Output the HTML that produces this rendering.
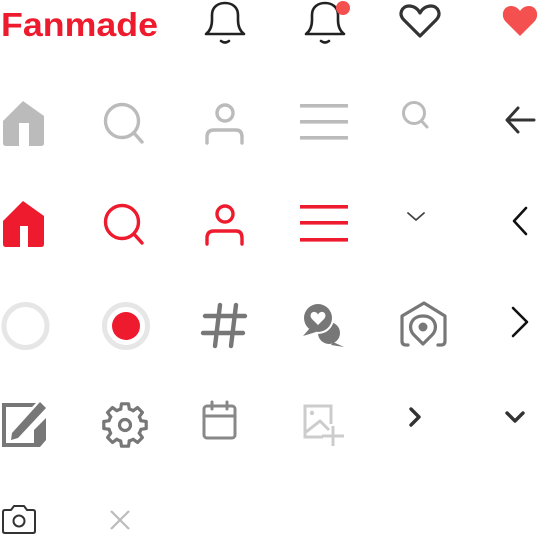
<!DOCTYPE html>
<html><head><meta charset="utf-8"><style>
html,body{margin:0;padding:0;background:#fff;width:540px;height:540px;overflow:hidden}
svg{display:block}
</style></head><body>
<svg width="540" height="540" viewBox="0 0 540 540" xmlns="http://www.w3.org/2000/svg">
<defs>
<path id="tooth" d="M15.9,-4.3 L21.2,-3.5 L21.2,3.5 L15.9,4.3 A16.5 16.5 0 0 1 14.3,8.25" fill="none"/>
</defs>
<!-- Row 1 -->
<text x="1" y="36" font-family="Liberation Sans, sans-serif" font-weight="bold" font-size="33" fill="#ee1b2e" textLength="157" lengthAdjust="spacingAndGlyphs">Fanmade</text>
<g fill="none" stroke="#222" stroke-width="2.6" stroke-linejoin="round" stroke-linecap="round">
 <path d="M206,34 C210,31 212,27 212,20 L212,15 C212,7 218,3 225,3 C232,3 238,7 238,15 L238,20 C238,27 240,31 244,34 Z"/>
 <path d="M221,41 Q225,44 229,41"/>
 <path d="M306,34 C310,31 312,27 312,20 L312,15 C312,7 318,3 325,3 C332,3 338,7 338,15 L338,20 C338,27 340,31 344,34 Z"/>
 <path d="M321,41 Q325,44 329,41"/>
</g>
<circle cx="343" cy="8" r="7" fill="#f55050"/>
<path d="M420,36 L404,20 C398,14 402,6 409,6 C414,6 418,9 420,13 C422,9 426,6 431,6 C438,6 442,14 436,20 Z" fill="none" stroke="#333" stroke-width="3.2" stroke-linejoin="round"/>
<path d="M520,36 L506,22 C500,16 503,6 511,6 C515,6 518,8 520,11 C522,8 525,6 529,6 C537,6 540,16 534,22 Z" fill="#f55050"/>

<!-- Row 2 gray -->
<g transform="translate(0,-4)">
<path d="M3,125 L23,105 L44,120 V147 Q44,150 41,150 H29 V127 H19 V150 H6 Q3,150 3,147 Z" fill="#bbb"/>
<g fill="none" stroke="#bbb" stroke-width="3.4" stroke-linecap="round">
 <circle cx="122" cy="125" r="16.5"/>
 <path d="M134,137 L142,146"/>
 <circle cx="225" cy="117" r="8"/>
 <path d="M207,147 V141 Q207,134 214,134 H236 Q242,134 242,141 V147"/>
 <circle cx="414" cy="117" r="10.5" stroke-width="3"/>
 <path d="M421.5,125 L427,131" stroke-width="3"/>
</g>
<g fill="#bbb"><rect x="300" y="108" width="48" height="3.6"/><rect x="300" y="124" width="48" height="3.6"/><rect x="300" y="140" width="48" height="3.6"/></g>
<path d="M534,124 H508 M518,112 L507,124 L518,136" fill="none" stroke="#333" stroke-width="3" stroke-linecap="round" stroke-linejoin="round"/>
</g>

<!-- Row 3 red -->
<path d="M3,221 L23,201 L44,216 V244 Q44,247 41,247 H28 V226 H20 V247 H6 Q3,247 3,244 Z" fill="#ee1b2e"/>
<g fill="none" stroke="#ee1b2e" stroke-width="3.4" stroke-linecap="round">
 <circle cx="122" cy="222" r="16.5"/>
 <path d="M134,234 L142,243"/>
 <circle cx="225" cy="214" r="8"/>
 <path d="M207,244 V238 Q207,231 214,231 H236 Q242,231 242,238 V244"/>
</g>
<g fill="#ee1b2e"><rect x="300" y="205" width="48" height="3.6"/><rect x="300" y="221" width="48" height="3.6"/><rect x="300" y="238" width="48" height="3.6"/></g>
<path d="M408,213 L416,220 L424,213" fill="none" stroke="#444" stroke-width="1.8" stroke-linecap="round" stroke-linejoin="round"/>
<path d="M526,208 L514,221 L526,234" fill="none" stroke="#111" stroke-width="2.6" stroke-linecap="round" stroke-linejoin="round"/>

<!-- Row 4 -->
<g transform="translate(0,-4)">
<circle cx="25.5" cy="330" r="21.5" fill="none" stroke="#e6e6e6" stroke-width="5"/>
<circle cx="126" cy="330" r="21.5" fill="none" stroke="#e6e6e6" stroke-width="5"/>
<circle cx="126" cy="330" r="14" fill="#ee1b2e"/>
<g stroke="#777" stroke-width="4.4" stroke-linecap="round" fill="none">
 <path d="M220,309 L215,350 M236,309 L231,350 M205,320 H245 M203,337 H243"/>
</g>
<g>
 <circle cx="329" cy="337" r="11" fill="#777"/>
 <path d="M333,346 L344,351 L331,349 Z" fill="#777"/>
 <circle cx="318" cy="322" r="16" fill="#fff"/>
 <circle cx="318" cy="322" r="14" fill="#777"/>
 <path d="M310,332 L303,340 L316,336 Z" fill="#777"/>
 <path d="M318,329 L312,323 C309,320 311,315 315,316 C316.5,316.3 317.5,317.5 318,318.5 C318.5,317.5 319.5,316.3 321,316 C325,315 327,320 324,323 Z" fill="#fff"/>
</g>
<g fill="none" stroke="#777" stroke-width="3.2" stroke-linecap="round" stroke-linejoin="round">
 <path d="M408,349 H406 Q402,349 402,345 V320 L424,307 L445,320 V345 Q445,349 441,349 H438"/>
 <path d="M423,348 L414,339 C407,332 411,320 423,320 C435,320 439,332 432,339 Z"/>
</g>
<circle cx="423" cy="331" r="4.5" fill="#777"/>
<path d="M513,312 L527,326 L513,340" fill="none" stroke="#111" stroke-width="2.6" stroke-linecap="round" stroke-linejoin="round"/>
</g>

<!-- Row 5 -->
<g fill="#777">
 <path d="M2,403 H36 L32,407 H6 V443 H34 V430 L38,426 V447 H2 Z"/>
 <path d="M38,426 L46,418 V440 L40,447 H38 Z"/>
 <path d="M40,402 L46,408 L18,438 L11,440 L12,433 Z"/>
</g>
<g stroke="#777" stroke-width="3.2" stroke-linejoin="round" stroke-linecap="round" fill="none" transform="translate(125,425)">
 <use href="#tooth"/>
 <use href="#tooth" transform="rotate(45)"/>
 <use href="#tooth" transform="rotate(90)"/>
 <use href="#tooth" transform="rotate(135)"/>
 <use href="#tooth" transform="rotate(180)"/>
 <use href="#tooth" transform="rotate(225)"/>
 <use href="#tooth" transform="rotate(270)"/>
 <use href="#tooth" transform="rotate(315)"/>
 <circle r="5.5"/>
</g>
<g fill="none" stroke="#888" stroke-width="3" stroke-linecap="round">
 <rect x="204" y="406" width="31" height="32" rx="3"/>
 <path d="M204,416 H235 M212,402 V409 M227,402 V409"/>
</g>
<g fill="none" stroke="#ccc" stroke-width="3">
 <path d="M331,424 V406 H305 V437 H323"/>
 <path d="M306,432 L320,421 L329,430" stroke-linejoin="round"/>
 <path d="M322,436 H344 M333,426 V446"/>
</g>
<circle cx="312" cy="413" r="2.2" fill="#ccc"/>
<path d="M411,409 L419,417 L411,425" fill="none" stroke="#333" stroke-width="3.4" stroke-linecap="round" stroke-linejoin="round"/>
<path d="M507,413 L515,421 L523,413" fill="none" stroke="#333" stroke-width="3.4" stroke-linecap="round" stroke-linejoin="round"/>

<!-- Row 6 -->
<g transform="translate(0,-4)">
<g fill="none" stroke="#333" stroke-width="2" stroke-linejoin="round">
 <path d="M5,514 H11 L14,510 H24 L27,514 H33 Q35,514 35,516 V535 Q35,537 33,537 H5 Q3,537 3,535 V516 Q3,514 5,514 Z"/>
 <circle cx="19" cy="525" r="5.5"/>
</g>
<path d="M111,515 L129,533 M129,515 L111,533" stroke="#bbb" stroke-width="2.2"/>
</g>
</svg>
</body></html>
